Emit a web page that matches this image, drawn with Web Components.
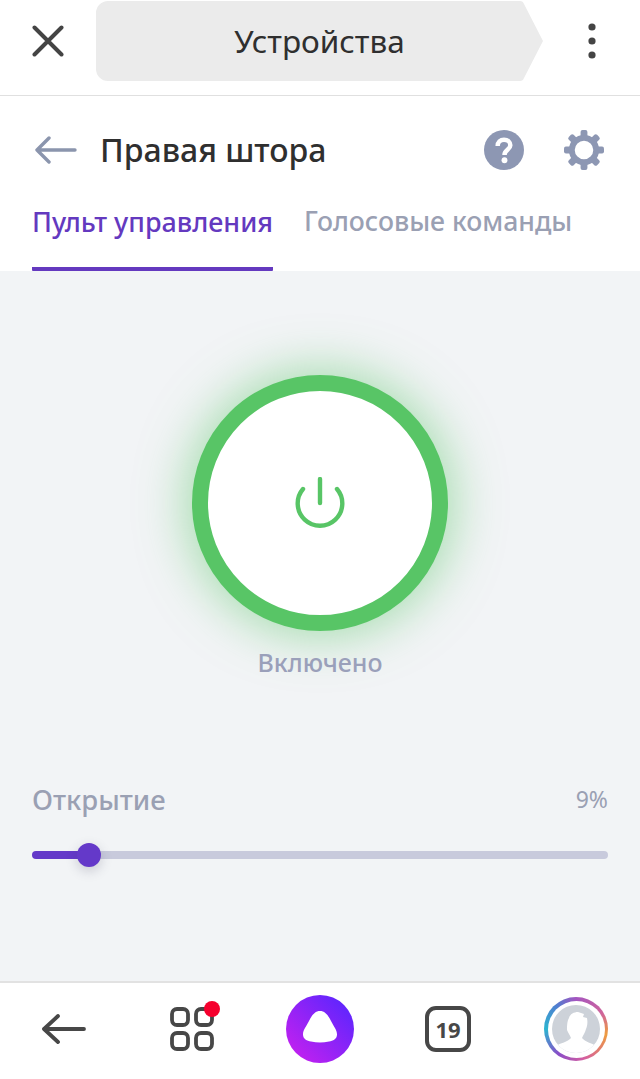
<!DOCTYPE html>
<html lang="ru">
<head>
<meta charset="utf-8">
<title>Правая штора</title>
<style>
  html, body { margin: 0; height: 100%; }
  body {
    display: flex;
    flex-direction: column;
    height: 1079px;
    overflow: hidden;
    background: #fff;
    font-family: "Noto Sans", "Open Sans", sans-serif;
  }
</style>
</head>
<body>
<top-bar title-text="Устройства"></top-bar>
<device-header name="Правая штора"></device-header>
<device-tabs active="Пульт управления" other="Голосовые команды"></device-tabs>
<control-panel>
  <power-button label="Включено"></power-button>
  <open-slider label="Открытие" value="9"></open-slider>
</control-panel>
<bottom-nav count="19"></bottom-nav>

<script>
class TopBar extends HTMLElement {
  constructor() {
    super();
    this.attachShadow({ mode: "open" });
  }

  connectedCallback() {
    this.shadowRoot.innerHTML = `
      <style>
        :host {
          display: flex;
          align-items: flex-start;
          flex: none;
          height: 95px;
          border-bottom: 1px solid #e0e0e0;
        }
        .close { width: 96px; height: 82px; display: flex; align-items: center; justify-content: center; flex: none; }
        .pill {
          width: 447px;
          height: 80px;
          margin-top: 1px;
          flex: none;
          background: #ebebeb;
          clip-path: path("M12 0H424Q427 0 428 3L447 40L428 77Q427 80 424 80H12A12 12 0 0 1 0 68V12A12 12 0 0 1 12 0Z");
          display: flex;
          align-items: center;
          justify-content: center;
          font-size: 31.5px;
          color: #2f2f2f;
        }
        .pill span { margin-bottom: 2px; }
        .more { flex: 1; height: 82px; display: flex; align-items: center; justify-content: center; }
      </style>
      <div class="close">
        <svg width="32" height="32" viewBox="0 0 32 32" fill="none" stroke="#444" stroke-width="4" stroke-linecap="round"><path d="M2.5 2.5L29.5 29.5M29.5 2.5L2.5 29.5"/></svg>
      </div>
      <div class="pill"><span>${this.getAttribute("title-text")}</span></div>
      <div class="more">
        <svg width="10" height="36" viewBox="0 0 10 36" fill="#444"><circle cx="5" cy="4" r="3.6"/><circle cx="5" cy="18" r="3.6"/><circle cx="5" cy="32" r="3.6"/></svg>
      </div>
    `;
  }
}

class DeviceHeader extends HTMLElement {
  constructor() {
    super();
    this.attachShadow({ mode: "open" });
  }

  connectedCallback() {
    this.shadowRoot.innerHTML = `
      <style>
        :host {
          display: flex;
          align-items: center;
          flex: none;
          height: 108px;
          padding: 0 36px 0 35px;
        }
        .back { flex: none; display: block; margin-right: 23px; }
        h1 { flex: 1; margin: 0 0 2px; font-size: 32px; font-weight: 500; color: #2f2f2f; }
        .icons { display: flex; align-items: center; gap: 40px; }
        svg { display: block; }
      </style>
      <svg class="back" width="42" height="28" viewBox="0 0 42 28" fill="none" stroke="#8b95ad" stroke-width="3.4" stroke-linecap="round" stroke-linejoin="round"><path d="M2 14H40M14 2L2 14L14 26"/></svg>
      <h1>${this.getAttribute("name")}</h1>
      <div class="icons">
        <svg width="40" height="40" viewBox="0 0 41 41"><circle cx="20.5" cy="20.5" r="20.5" fill="#8d97b3"/><path d="M14 16.5C14 12.5 16.8 10 20.5 10C24.4 10 27 12.4 27 15.6C27 20.2 21 20.5 21 25.5" fill="none" stroke="#fff" stroke-width="4.6"/><circle cx="21" cy="31" r="3" fill="#fff"/></svg>
        <svg width="40" height="40" viewBox="0 0 41 41"><g fill="#8d97b3"><rect x="17" y="0" width="7" height="41" rx="2"/><rect x="17" y="0" width="7" height="41" rx="2" transform="rotate(45 20.5 20.5)"/><rect x="17" y="0" width="7" height="41" rx="2" transform="rotate(90 20.5 20.5)"/><rect x="17" y="0" width="7" height="41" rx="2" transform="rotate(135 20.5 20.5)"/></g><circle cx="20.5" cy="20.5" r="12.5" fill="#fff" stroke="#8d97b3" stroke-width="6"/></svg>
      </div>
    `;
  }
}

class DeviceTabs extends HTMLElement {
  constructor() {
    super();
    this.attachShadow({ mode: "open" });
  }

  connectedCallback() {
    this.shadowRoot.innerHTML = `
      <style>
        :host {
          display: flex;
          flex: none;
          height: 67px;
          padding-left: 32px;
          gap: 31px;
          font-size: 26.9px;
          font-weight: 500;
        }
        div { height: 63px; line-height: 35px; white-space: nowrap; }
        .on { color: #6439bf; border-bottom: 4px solid #6439bf; border-radius: 0 0 1px 1px; }
        .off { color: #9aa0b3; font-size: 26.6px; }
      </style>
      <div class="on">${this.getAttribute("active")}</div>
      <div class="off">${this.getAttribute("other")}</div>
    `;
  }
}

class ControlPanel extends HTMLElement {
  constructor() {
    super();
    this.attachShadow({ mode: "open" });
    this.shadowRoot.innerHTML = `
      <style>
        :host {
          display: flex;
          flex-direction: column;
          flex: 1;
          background: #f2f4f6;
          padding: 104px 32px 0;
        }
      </style>
      <slot></slot>
    `;
  }
}

class PowerButton extends HTMLElement {
  constructor() {
    super();
    this.attachShadow({ mode: "open" });
  }

  connectedCallback() {
    this.shadowRoot.innerHTML = `
      <style>
        :host { display: flex; flex-direction: column; align-items: center; flex: none; }
        .ring {
          width: 256px;
          height: 256px;
          box-sizing: border-box;
          border-radius: 50%;
          background: #fff;
          border: 16px solid #58c566;
          box-shadow: 0 0 48px 6px rgba(88, 197, 102, .5);
          display: flex;
          align-items: center;
          justify-content: center;
        }
        .label { margin-top: 15px; font-size: 25px; font-weight: 500; line-height: 32px; color: #9aa0ba; }
        svg { display: block; }
      </style>
      <div class="ring">
        <svg width="50" height="52" viewBox="0 0 50 52" fill="none" stroke="#58c566" stroke-width="4.4" stroke-linecap="round"><path d="M25 2V26M8 12A22.3 22.3 0 1 0 42 12"/></svg>
      </div>
      <div class="label">${this.getAttribute("label")}</div>
    `;
  }
}

class OpenSlider extends HTMLElement {
  constructor() {
    super();
    this.attachShadow({ mode: "open" });
  }

  connectedCallback() {
    const value = this.getAttribute("value");
    this.shadowRoot.innerHTML = `
      <style>
        :host { display: block; flex: none; margin-top: 103px; }
        .top { display: flex; justify-content: space-between; align-items: center; color: #9aa0b3; height: 36px; }
        .name { font-size: 27.4px; font-weight: 500; }
        .val { font-size: 23px; }
        .track {
          position: relative;
          height: 8px;
          margin-top: 34px;
          border-radius: 4px;
          background: linear-gradient(to right, #6439c9 57px, #c8cadc 57px);
        }
        .thumb {
          position: absolute;
          left: 45px;
          top: -8px;
          width: 24px;
          height: 24px;
          border-radius: 50%;
          background: #6439c9;
          box-shadow: 0 4px 12px rgba(60, 60, 90, .22);
        }
      </style>
      <div class="top">
        <span class="name">${this.getAttribute("label")}</span>
        <span class="val">${value}%</span>
      </div>
      <div class="track"><div class="thumb"></div></div>
    `;
  }
}

class BottomNav extends HTMLElement {
  constructor() {
    super();
    this.attachShadow({ mode: "open" });
  }

  connectedCallback() {
    this.shadowRoot.innerHTML = `
      <style>
        :host {
          display: grid;
          grid-template-columns: repeat(5, 1fr);
          align-items: center;
          justify-items: center;
          flex: none;
          height: 92px;
          padding-bottom: 4px;
          border-top: 2px solid #e2e2e2;
          background: #fff;
        }
        svg { display: block; }
        .apps { position: relative; }
        .dot { position: absolute; right: -6px; top: -6px; width: 16px; height: 16px; border-radius: 50%; background: #f5002d; }
        .alice {
          width: 68px;
          height: 68px;
          border-radius: 50%;
          background: linear-gradient(45deg, #cf20ee, #5026ff);
          display: flex;
          align-items: center;
          justify-content: center;
        }
        .alice svg { margin-top: -4px; }
        .count {
          width: 46px;
          height: 46px;
          box-sizing: border-box;
          border: 4px solid #474747;
          border-radius: 11px;
          display: flex;
          align-items: center;
          justify-content: center;
          font-size: 22px;
          font-weight: 700;
          color: #474747;
        }
        .avatar {
          width: 64px;
          height: 64px;
          box-sizing: border-box;
          padding: 3.5px;
          border-radius: 50%;
          background: conic-gradient(from 0deg, #a455c0, #d0659a 60deg, #ee9c3f 100deg, #d45ea0 165deg, #8a4dc8 215deg, #2cb4d0 270deg, #4f7fd0 320deg, #a455c0);
        }
        .inner { width: 57px; height: 57px; border-radius: 50%; background: #fff; display: flex; align-items: center; justify-content: center; }
      </style>
      <svg width="44" height="30" viewBox="0 0 44 30" fill="none" stroke="#474747" stroke-width="3.8" stroke-linecap="round" stroke-linejoin="round"><path d="M2 15H42M16 2L2 15L16 28"/></svg>
      <div class="apps">
        <svg width="44" height="44" viewBox="0 0 44 44" fill="none" stroke="#474747" stroke-width="3.8"><rect x="2" y="2" width="16" height="16" rx="5"/><rect x="26" y="2" width="16" height="16" rx="5"/><rect x="2" y="26" width="16" height="16" rx="5"/><rect x="26" y="26" width="16" height="16" rx="5"/></svg>
        <span class="dot"></span>
      </div>
      <div class="alice">
        <svg width="34" height="32" viewBox="0 0 34 32"><path d="M17 0C22 0 25 4 28 10C31 16 34 19 34 23.5C34 28 30 30 26 30.5C23 31 20 31.5 17 31.5C14 31.5 11 31 8 30.5C4 30 0 28 0 23.5C0 19 3 16 6 10C9 4 12 0 17 0Z" fill="#fff"/></svg>
      </div>
      <div class="count">${this.getAttribute("count")}</div>
      <div class="avatar">
        <div class="inner">
          <svg width="48" height="48" viewBox="0 0 48 48"><defs><clipPath id="c"><circle cx="24" cy="24" r="24"/></clipPath></defs><g clip-path="url(#c)"><rect width="48" height="48" fill="#cdd2d9"/><path d="M17 13C18 9 22 7 26 7L32 9L31 12L35 13C36 18 35 22 34 24C33 28 31 30 30 33C33 37 40 38 44 41V48H4V41C8 38 16 37 19 33C18 30 16 28 15 25C15 22 15 16 17 13Z" fill="#fff"/></g></svg>
        </div>
      </div>
    `;
  }
}

window.customElements.define("top-bar", TopBar);
window.customElements.define("device-header", DeviceHeader);
window.customElements.define("device-tabs", DeviceTabs);
window.customElements.define("control-panel", ControlPanel);
window.customElements.define("power-button", PowerButton);
window.customElements.define("open-slider", OpenSlider);
window.customElements.define("bottom-nav", BottomNav);
</script>
</body>
</html>
